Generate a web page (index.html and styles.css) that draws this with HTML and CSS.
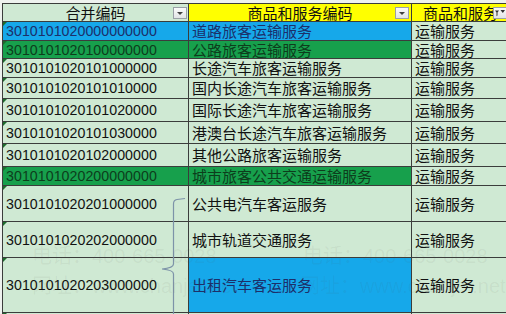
FILE: index.html
```html
<!DOCTYPE html>
<html lang="zh-CN">
<head>
<meta charset="utf-8">
<title>商品和服务编码</title>
<link rel="stylesheet" href="styles.css">
</head>
<body>
<div class="sheet">
  <div class="grid">
    <div class="cell hdr hdr-green">合并编码<span class="dd dd-1"><i></i></span></div>
    <div class="cell hdr hdr-yellow">商品和服务编码<span class="dd dd-2"><i></i></span></div>
    <div class="cell hdr hdr-yellow hdr-left">商品和服务<span class="dd dd-3"><svg viewBox="0 0 12 10" width="12" height="10"><path d="M1 2.5h4l-1.5 2v3l-1 .7v-3.7z" fill="#333"/><path d="M6.5 2h4.5l-2.2 3z" fill="#333"/></svg></span></div>

    <div class="cell code blue">3010101020000000000</div>
    <div class="cell name blue">道路旅客运输服务</div>
    <div class="cell name">运输服务</div>

    <div class="cell code green">3010101020100000000</div>
    <div class="cell name green">公路旅客运输服务</div>
    <div class="cell name">运输服务</div>

    <div class="cell code">3010101020101000000</div>
    <div class="cell name">长途汽车旅客运输服务</div>
    <div class="cell name">运输服务</div>

    <div class="cell code">3010101020101010000</div>
    <div class="cell name">国内长途汽车旅客运输服务</div>
    <div class="cell name">运输服务</div>

    <div class="cell code">3010101020101020000</div>
    <div class="cell name">国际长途汽车旅客运输服务</div>
    <div class="cell name">运输服务</div>

    <div class="cell code">3010101020101030000</div>
    <div class="cell name">港澳台长途汽车旅客运输服务</div>
    <div class="cell name">运输服务</div>

    <div class="cell code">3010101020102000000</div>
    <div class="cell name">其他公路旅客运输服务</div>
    <div class="cell name">运输服务</div>

    <div class="cell code green">3010101020200000000</div>
    <div class="cell name green">城市旅客公共交通运输服务</div>
    <div class="cell name">运输服务</div>

    <div class="cell code">3010101020201000000</div>
    <div class="cell name">公共电汽车客运服务</div>
    <div class="cell name">运输服务</div>

    <div class="cell code">3010101020202000000</div>
    <div class="cell name">城市轨道交通服务</div>
    <div class="cell name">运输服务</div>

    <div class="cell code">3010101020203000000</div>
    <div class="cell name blue">出租汽车客运服务</div>
    <div class="cell name">运输服务</div>

    <div class="cell code"></div>
    <div class="cell name"></div>
    <div class="cell name"></div>
  </div>

  <svg class="brace" width="506" height="314" viewBox="0 0 506 314">
    <path d="M185 198.5 L177 199.5 Q173.5 200 173.5 204 L173.5 264 Q173.5 268 162 269 Q173.5 270 173.5 274 L173.5 316" fill="none" stroke="#7d93a8" stroke-width="1.2"/>
  </svg>

  <div class="wm wm-c1">电话：400-665-0028</div>
  <div class="wm wm-c2">电话：400-665-0028</div>
  <div class="wm wm-d1">网址：www.chanjet.net</div>
  <div class="wm wm-d2">网址：www.chanjet.net</div>
</div>
</body>
</html>
```

FILE: styles.css
```css
html, body {
  margin: 0;
  padding: 0;
}

body {
  width: 506px;
  height: 314px;
  overflow: hidden;
  background: #eef2ee;
  font-family: "Noto Sans CJK SC", sans-serif;
}

.sheet {
  position: relative;
  width: 506px;
  height: 314px;
  overflow: hidden;
  padding-top: 3px;
  padding-left: 2px;
  box-sizing: border-box;
}

.grid {
  display: grid;
  width: max-content;
  grid-template-columns: 185px 222px 140px;
  grid-template-rows: 17px 18px 17px 18px 20px 22px 21px 22px 18px 35px 35px 54px 30px;
  gap: 1px;
  padding: 1px;
  background: #3b3d3b;
}

.cell {
  position: relative;
  display: flex;
  align-items: center;
  background: #cfe9d3;
  color: #111;
  font-size: 15px;
  line-height: 16px;
  white-space: nowrap;
  padding-left: 3px;
}

.hdr {
  justify-content: center;
  padding-left: 0;
}

.hdr-green {
  background: #cfe9d3;
}

.hdr-yellow {
  background: #ffff00;
}

.hdr-left {
  justify-content: flex-start;
  padding-left: 11px;
}

.code {
  font-family: "Liberation Sans", "Noto Sans CJK SC", sans-serif;
  font-size: 14.2px;
  letter-spacing: 0.05px;
}

.code::before {
  content: "";
  position: absolute;
  left: 0;
  top: 0;
  border-top: 4px solid #1d6b2c;
  border-right: 4px solid transparent;
}

.name {
  font-size: 15px;
}

.blue {
  background: #16a8ea;
  color: #1c2f6a;
}

.green {
  background: #17a04c;
  color: #0d3d1c;
}

.dd {
  position: absolute;
  top: 3px;
  width: 12px;
  height: 10px;
  border: 1px solid #9aa0a6;
  background: linear-gradient(#fbfbfb, #e2e4e6);
  display: flex;
  align-items: center;
  justify-content: center;
}

.dd i {
  display: block;
  border-top: 3px solid #404040;
  border-left: 3px solid transparent;
  border-right: 3px solid transparent;
}

.dd-1 {
  right: 1px;
}

.dd-2 {
  right: 2px;
}

.dd-3 {
  left: 81px;
}

.brace {
  position: absolute;
  left: 0;
  top: 0;
  pointer-events: none;
}

.wm {
  position: absolute;
  font-family: "Liberation Sans", "Noto Sans CJK SC", sans-serif;
  font-size: 20px;
  color: rgba(80, 80, 80, 0.07);
  white-space: nowrap;
  pointer-events: none;
}

.wm-c1 { left: 32px; top: 240px; }
.wm-c2 { left: 303px; top: 240px; }
.wm-d1 { left: 32px; top: 270px; }
.wm-d2 { left: 300px; top: 270px; }
```
